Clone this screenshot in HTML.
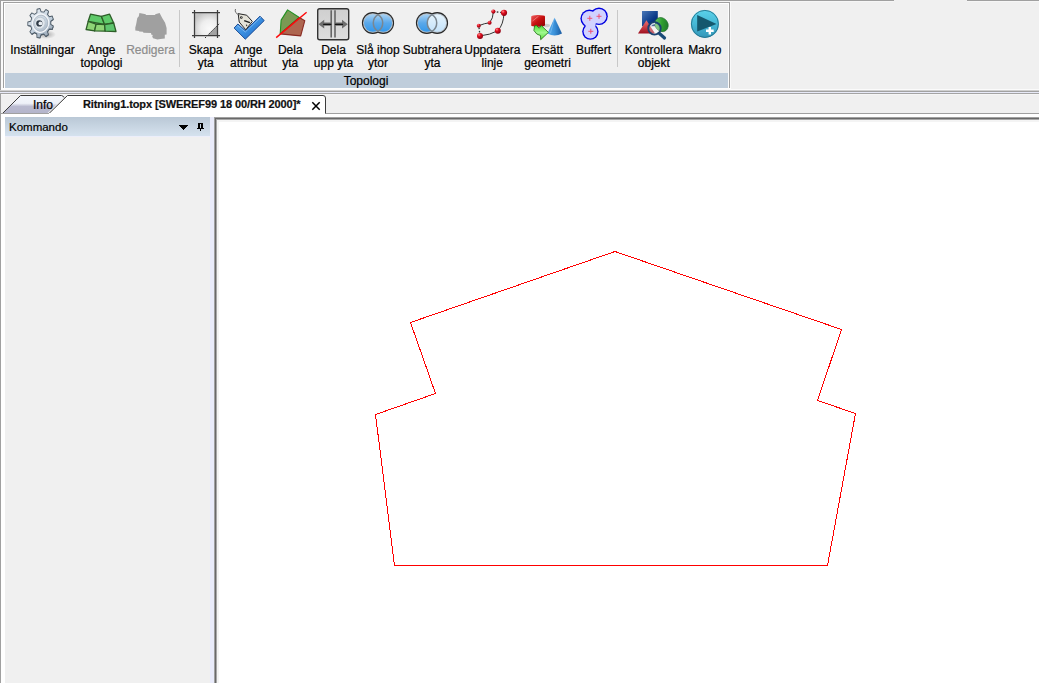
<!DOCTYPE html>
<html><head><meta charset="utf-8">
<style>
html,body{margin:0;padding:0;}
body{width:1039px;height:683px;overflow:hidden;position:relative;background:#f0f0f0;font-family:"Liberation Sans",sans-serif;font-size:12px;color:#000;-webkit-text-stroke:0.2px currentColor;}
.a{position:absolute;}
.lbl{position:absolute;text-align:center;white-space:nowrap;line-height:13px;width:100px;-webkit-text-stroke:0.2px currentColor;}
.ico{position:absolute;}
</style></head><body>
<!-- top border line -->
<div class="a" style="left:0;top:0;width:894px;height:1px;background:#a0a0a0"></div>
<div class="a" style="left:967px;top:0;width:72px;height:1px;background:#a0a0a0"></div>
<div class="a" style="left:0;top:1px;width:894px;height:1px;background:#f6f6f6"></div>
<div class="a" style="left:967px;top:1px;width:72px;height:1px;background:#f6f6f6"></div>
<!-- left border -->
<div class="a" style="left:0;top:0;width:1px;height:683px;background:#a0a0a0"></div>
<div class="a" style="left:1px;top:1px;width:2px;height:91px;background:#fafafa"></div>

<!-- ribbon group box -->
<div class="a" style="left:3px;top:2px;width:726px;height:1px;background:#a0a0a0"></div>
<div class="a" style="left:3px;top:2px;width:1px;height:86px;background:#a0a0a0"></div>
<div class="a" style="left:729px;top:2px;width:1px;height:86px;background:#a0a0a0"></div>
<div class="a" style="left:730px;top:2px;width:1px;height:87px;background:#fafafa"></div>
<div class="a" style="left:4px;top:3px;width:725px;height:1px;background:#fff"></div>
<div class="a" style="left:4px;top:3px;width:1px;height:85px;background:#fff"></div>
<div class="a" style="left:728px;top:3px;width:1px;height:85px;background:#fcfcfc"></div>
<!-- group label band -->
<div class="a" style="left:5px;top:73px;width:723px;height:15px;background:#bfcddb;"></div><div class="a" style="left:4.5px;top:74px;width:723px;text-align:center;line-height:15px;">Topologi</div>
<div class="a" style="left:1px;top:88px;width:730px;height:1px;background:#fdfdfd"></div>
<div class="a" style="left:1px;top:89px;width:1038px;height:1px;background:#fbfbfb"></div>
<div class="a" style="left:0;top:90px;width:1039px;height:1px;background:#d0d0d0"></div>
<div class="a" style="left:0;top:91px;width:1039px;height:1px;background:#a2a2a2"></div>
<div class="a" style="left:0;top:92px;width:1039px;height:1px;background:#e8eaf8"></div>
<div class="a" style="left:0;top:93px;width:1039px;height:1px;background:#a4a4a4"></div>
<div class="a" style="left:1px;top:94px;width:1038px;height:1px;background:#f6f6f6"></div>

<!-- separators -->
<div class="a" style="left:179px;top:10px;width:1px;height:57px;background:#c8c8c8"></div>
<div class="a" style="left:617px;top:10px;width:1px;height:57px;background:#c8c8c8"></div>

<!-- labels -->
<div class="lbl" style="left:-7.5px;top:44px">Inställningar</div>
<div class="lbl" style="left:51.5px;top:44px">Ange<br>topologi</div>
<div class="lbl" style="left:100.5px;top:44px;color:#8d8d8d">Redigera</div>
<div class="lbl" style="left:155.7px;top:44px">Skapa<br>yta</div>
<div class="lbl" style="left:198.4px;top:44px">Ange<br>attribut</div>
<div class="lbl" style="left:240.3px;top:44px">Dela<br>yta</div>
<div class="lbl" style="left:283.5px;top:44px">Dela<br>upp yta</div>
<div class="lbl" style="left:328px;top:44px">Slå ihop<br>ytor</div>
<div class="lbl" style="left:382.5px;top:44px">Subtrahera<br>yta</div>
<div class="lbl" style="left:442.3px;top:44px">Uppdatera<br>linje</div>
<div class="lbl" style="left:497.5px;top:44px">Ersätt<br>geometri</div>
<div class="lbl" style="left:543.5px;top:44px">Buffert</div>
<div class="lbl" style="left:603.8px;top:44px">Kontrollera<br>objekt</div>
<div class="lbl" style="left:654.8px;top:44px">Makro</div>

<!-- ICONS -->
<svg class="a" style="left:0;top:0" width="740" height="45">
<defs>
<linearGradient id="gearG" x1="0" y1="0" x2="1" y2="1"><stop offset="0" stop-color="#eef3f8"/><stop offset="0.55" stop-color="#c2cfdc"/><stop offset="1" stop-color="#8898a8"/></linearGradient>
<radialGradient id="gshadow" cx="0.5" cy="0.5" r="0.5"><stop offset="0" stop-color="#000" stop-opacity="0.3"/><stop offset="1" stop-color="#000" stop-opacity="0"/></radialGradient>
<radialGradient id="skapaG" cx="0.65" cy="0.7" r="0.75"><stop offset="0" stop-color="#fafafa"/><stop offset="0.5" stop-color="#eeeeee"/><stop offset="1" stop-color="#c4c4c4"/></radialGradient>
<linearGradient id="delaG" x1="0" y1="0" x2="0" y2="1"><stop offset="0" stop-color="#cfcfcf"/><stop offset="1" stop-color="#dedede"/></linearGradient>
<linearGradient id="blueC" x1="0" y1="0" x2="0" y2="1"><stop offset="0" stop-color="#a8d2f4"/><stop offset="0.5" stop-color="#5aa8ea"/><stop offset="1" stop-color="#3598ea"/></linearGradient>
<linearGradient id="lightC" x1="0" y1="0" x2="0" y2="1"><stop offset="0" stop-color="#e6f4fd"/><stop offset="1" stop-color="#c4e2fa"/></linearGradient>
<linearGradient id="checkG" x1="0" y1="0" x2="1" y2="1"><stop offset="0" stop-color="#6ab2f2"/><stop offset="0.5" stop-color="#3a8ee0"/><stop offset="1" stop-color="#1a62c0"/></linearGradient>
<radialGradient id="ballG" cx="0.35" cy="0.3" r="0.7"><stop offset="0" stop-color="#ff9090"/><stop offset="0.4" stop-color="#e01020"/><stop offset="1" stop-color="#900010"/></radialGradient>
<linearGradient id="cubeG" x1="0" y1="0" x2="1" y2="1"><stop offset="0" stop-color="#f06060"/><stop offset="0.5" stop-color="#c81010"/><stop offset="1" stop-color="#8a0000"/></linearGradient>
<linearGradient id="coneG" x1="0" y1="0" x2="1" y2="0"><stop offset="0" stop-color="#5ab0f0"/><stop offset="0.5" stop-color="#3a90d8"/><stop offset="1" stop-color="#1a5aa0"/></linearGradient>
<linearGradient id="arrG" x1="0" y1="0" x2="0" y2="1"><stop offset="0" stop-color="#50e030"/><stop offset="0.5" stop-color="#a0f890"/><stop offset="1" stop-color="#58e038"/></linearGradient>
<linearGradient id="sqG" x1="0" y1="0" x2="1" y2="1"><stop offset="0" stop-color="#4a78b8"/><stop offset="0.6" stop-color="#0a3a88"/><stop offset="1" stop-color="#002060"/></linearGradient>
<linearGradient id="triG" x1="0" y1="0" x2="0" y2="1"><stop offset="0" stop-color="#f07070"/><stop offset="1" stop-color="#a01020"/></linearGradient>
<linearGradient id="ellG" x1="0" y1="0" x2="1" y2="1"><stop offset="0" stop-color="#80d080"/><stop offset="0.5" stop-color="#30a030"/><stop offset="1" stop-color="#1a6a2a"/></linearGradient>
<linearGradient id="makG" x1="0" y1="0" x2="0" y2="1"><stop offset="0" stop-color="#5ad2ea"/><stop offset="0.5" stop-color="#46b8d6"/><stop offset="1" stop-color="#3496b8"/></linearGradient>
</defs>

<!-- gear -->
<ellipse cx="46" cy="34.5" rx="10" ry="4.5" fill="url(#gshadow)"/>
<g transform="translate(40.7,23.2) rotate(9) scale(0.93,1.06)">
<path d="M-5.78,-9.24 L-6.28,-12.40 L-3.19,-13.53 L-1.53,-10.79 L1.51,-10.80 L3.16,-13.54 L6.26,-12.41 L5.77,-9.25 L8.09,-7.30 L11.12,-8.34 L12.77,-5.49 L10.36,-3.38 L10.89,-0.39 L13.88,0.76 L13.31,4.01 L10.11,4.07 L8.60,6.70 L10.14,9.51 L7.62,11.62 L5.13,9.62 L2.28,10.66 L1.66,13.80 L-1.63,13.80 L-2.26,10.66 L-5.11,9.63 L-7.60,11.64 L-10.12,9.52 L-8.58,6.72 L-10.10,4.09 L-13.30,4.03 L-13.88,0.79 L-10.89,-0.37 L-10.37,-3.36 L-12.78,-5.46 L-11.14,-8.32 L-8.11,-7.29 Z" fill="#56646f" transform="translate(0.5,0.6)"/>
<path d="M-5.78,-9.24 L-6.28,-12.40 L-3.19,-13.53 L-1.53,-10.79 L1.51,-10.80 L3.16,-13.54 L6.26,-12.41 L5.77,-9.25 L8.09,-7.30 L11.12,-8.34 L12.77,-5.49 L10.36,-3.38 L10.89,-0.39 L13.88,0.76 L13.31,4.01 L10.11,4.07 L8.60,6.70 L10.14,9.51 L7.62,11.62 L5.13,9.62 L2.28,10.66 L1.66,13.80 L-1.63,13.80 L-2.26,10.66 L-5.11,9.63 L-7.60,11.64 L-10.12,9.52 L-8.58,6.72 L-10.10,4.09 L-13.30,4.03 L-13.88,0.79 L-10.89,-0.37 L-10.37,-3.36 L-12.78,-5.46 L-11.14,-8.32 L-8.11,-7.29 Z" fill="url(#gearG)" stroke="#4c5a66" stroke-width="0.9" stroke-linejoin="round"/>
<circle r="8.6" fill="none" stroke="#f4f7fa" stroke-width="1.4"/>
<circle r="7.6" fill="none" stroke="#a4b0bc" stroke-width="0.7"/>
<circle cx="-0.8" cy="0" r="5.6" fill="#e2e8ee"/>
<circle cx="-0.8" cy="0" r="5.6" fill="none" stroke="#b8c4ce" stroke-width="0.8"/>
</g>
<circle cx="39.3" cy="23.4" r="3.1" fill="#303c48"/>
<circle cx="40.4" cy="23.4" r="1.9" fill="#e8edf2"/>
<!-- ange topologi -->
<g stroke="#2d5e28" stroke-width="1.3" stroke-linejoin="round">
<path d="M90.5,14.2 L101.4,16.3 L104.6,24.5 L88.2,21.3 Z" fill="#5fca6a"/>
<path d="M101.4,16.3 L109.6,14.2 L113.7,23 L104.6,24.5 Z" fill="#5fca6a"/>
<path d="M88.2,21.3 L96.1,24.2 L94.6,30.9 L86.1,29.5 Z" fill="#8ed476"/>
<path d="M96.1,24.2 L104.6,24.5 L105.2,31.2 L94.6,30.9 Z" fill="#8ed476"/>
<path d="M104.6,24.5 L113.7,23 L116,31.5 L105.2,31.2 Z" fill="#5ec56e"/>
</g>

<!-- redigera -->
<path d="M139.4,13.1 L145.8,14.2 L145.8,15.1 L155.2,15.1 L155.2,14.2 L159.6,13.1 L162.2,18 L165.1,22.7 L166.6,28 L166.6,34.4 L164.8,34.7 L164.8,38.5 L160.4,39.1 L157.5,39.4 L153.1,38.3 L152.2,36.5 L152.8,35 L151.1,34.4 L151.1,33 L143.5,32.7 L142.9,31.8 L139.1,31.5 L139.1,30.9 L135.3,30.6 L135.3,27.4 L136.1,24.5 L137.3,18 L138.8,16.3 Z" fill="#a0a0a0"/>

<!-- skapa yta -->
<rect x="194.5" y="12.5" width="23" height="23" fill="url(#skapaG)"/>
<path d="M207,35.5 L217.5,25 L217.5,35.5 Z" fill="#a4a4a4"/>
<path d="M205,38 L220,23" stroke="#303030" stroke-width="1" stroke-dasharray="1.6,1.4"/>
<g stroke="#3e3e3e" stroke-width="1.25">
<path d="M194.5,10 V38 M217.5,10 V38 M192,12.5 H220 M192,35.5 H220"/>
</g>

<!-- ange attribut -->
<path d="M234.1,28 L237.9,24 L245.3,30.5 L260,16.2 L264.2,20.6 L245.3,39.2 Z" fill="url(#checkG)" stroke="#1a4c96" stroke-width="1" stroke-linejoin="round"/>
<path d="M237.5,25.6 L245.3,32 L261,17" fill="none" stroke="#a8d4f8" stroke-width="0.8" opacity="0.7"/>
<path d="M238.2,13.6 L246.7,15.2 L252.3,21.4 L245.8,29.8 L239.2,22 Z" fill="#e4e2d8" stroke="#262626" stroke-width="1" stroke-linejoin="round"/>
<circle cx="241.3" cy="17.5" r="1.3" fill="#1e1e1e"/><circle cx="241.6" cy="17.3" r="0.5" fill="#ddd"/>
<path d="M244.2,20.6 L249.9,22.6" fill="none" stroke="#1e1e1e" stroke-width="1.5"/><path d="M246.4,24.6 L246.8,26.2" fill="none" stroke="#3a3a3a" stroke-width="1.1"/>
<path d="M239.5,15 Q234,13 235.5,9" fill="none" stroke="#606060" stroke-width="0.9"/>

<!-- dela yta -->
<path d="M287.6,9.9 L299.3,17.5 L280.2,33.9 L281.1,20.1 Z" fill="#7a9a54" stroke="#229022" stroke-width="1.1" stroke-linejoin="round"/>
<path d="M299.3,17.5 L304.8,20.7 L300.7,35.9 L280.2,33.9 Z" fill="#ae6650" stroke="#8a2a22" stroke-width="1.1" stroke-linejoin="round"/>
<path d="M276.2,37.6 L306.6,12.2" stroke="#ff0a0a" stroke-width="1.4"/>

<!-- dela upp yta -->
<rect x="317.7" y="8.7" width="31" height="31" rx="2" fill="url(#delaG)" stroke="#333" stroke-width="1.4"/>
<path d="M331.2,10.2 V37.6 M335,10.2 V37.6" stroke="#666" stroke-width="1.6"/>
<path d="M318.4,24.2 L324.2,19.8 L324.2,22.6 L331.2,22.6 L331.2,25.8 L324.2,25.8 L324.2,28.6 Z" fill="#6e6e6e"/>
<path d="M347.8,24.2 L342,19.8 L342,22.6 L335,22.6 L335,25.8 L342,25.8 L342,28.6 Z" fill="#6e6e6e"/>
<path d="M323.2,24.3 H331.3 M334.9,24.3 H343" stroke="#000" stroke-width="1"/>

<!-- sla ihop -->
<g>
<circle cx="372.8" cy="23" r="10.9" fill="#262626"/>
<circle cx="383.2" cy="23" r="10.9" fill="#262626"/>
<circle cx="372.8" cy="23" r="9.8" fill="#b8c0c8"/>
<circle cx="383.2" cy="23" r="9.8" fill="#b8c0c8"/>
<circle cx="372.8" cy="23" r="8.8" fill="url(#blueC)"/>
<circle cx="383.2" cy="23" r="8.8" fill="url(#blueC)"/>
<path d="M378.00,14.58 A9.9,9.9 0 0 0 378.00,31.42 A9.9,9.9 0 0 0 378.00,14.58 Z" fill="url(#blueC)" stroke="#7a8690" stroke-width="1.5"/>
</g>

<!-- subtrahera -->
<g>
<circle cx="426.8" cy="23" r="10.9" fill="#262626"/>
<circle cx="437.2" cy="23" r="10.9" fill="#262626"/>
<circle cx="426.8" cy="23" r="9.8" fill="#b8c0c8"/>
<circle cx="437.2" cy="23" r="9.8" fill="#b8c0c8"/>
<circle cx="426.8" cy="23" r="8.8" fill="url(#blueC)"/>
<circle cx="437.2" cy="23" r="8.8" fill="url(#lightC)"/>
<path d="M432.00,14.58 A9.9,9.9 0 0 0 432.00,31.42 A9.9,9.9 0 0 0 432.00,14.58 Z" fill="url(#lightC)" stroke="#7a8690" stroke-width="1.5"/>
</g>

<!-- uppdatera linje -->
<g fill="none" stroke="#333" stroke-width="1">
<path d="M478.8,25.7 Q484.5,23.3 489.6,22.7 Q493.2,18.5 493.4,11.6"/>
<path d="M504,12.8 Q503.6,24.5 497.8,30.7 Q490,35 480,35.9"/>
<path d="M493.4,11.6 L504,12.8 M480,35.9 L478.8,25.7" stroke-width="1.3" stroke-dasharray="1.6,1.8"/>
</g>
<circle cx="493.4" cy="11.6" r="2.1" fill="url(#ballG)"/>
<circle cx="504" cy="12.8" r="3.1" fill="url(#ballG)"/>
<circle cx="489.6" cy="22.7" r="2" fill="url(#ballG)"/>
<circle cx="478.8" cy="25.7" r="2" fill="url(#ballG)"/>
<circle cx="497.8" cy="30.7" r="3" fill="url(#ballG)"/>
<circle cx="480" cy="35.9" r="3" fill="url(#ballG)"/>

<!-- ersatt geometri -->
<ellipse cx="546.5" cy="25.5" rx="3.5" ry="1.8" fill="#000" opacity="0.15"/>
<path d="M531.2,16.6 Q531.5,15.1 538,15 Q544.8,15.1 545,16.4 L545,25.2 Q544.8,26.6 538,26.8 Q531.3,26.6 531.2,25.6 Z" fill="url(#cubeG)"/>
<path d="M532.5,21 L538.5,16.2" stroke="#ff9a9a" stroke-width="0.8" opacity="0.8"/>
<path d="M554.6,17.8 L547.4,33.6 Q554.6,37.4 562,33.6 Z" fill="url(#coneG)"/>
<path d="M554.6,17.8 L550.5,33" stroke="#a8d8ff" stroke-width="0.7" opacity="0.6"/>
<path d="M534.6,25.8 L536.6,25.6 L539.2,28.2 L541.2,25.4 L548.4,32.4 L540.7,39.7 L540.5,35.6 L536.8,34 L533.9,30.5 Z" fill="url(#arrG)" stroke="#1c6c10" stroke-width="0.8" stroke-linejoin="round"/>

<!-- buffert -->
<g fill="#0000e0">
<circle cx="589.4" cy="18.6" r="9"/>
<circle cx="599" cy="16.3" r="8.8"/>
<circle cx="590.4" cy="31.6" r="8.2"/>
</g>
<g fill="#d2d2ff">
<circle cx="589.4" cy="18.6" r="7.6"/>
<circle cx="599" cy="16.3" r="7.4"/>
<circle cx="590.4" cy="31.6" r="6.8"/>
<path d="M585,22 L596,22 L595,28 L586,28 Z"/>
</g>
<g stroke="#f04868" stroke-width="0.9">
<path d="M587.3,18.3 H592.3 M589.8,15.8 V20.8"/>
<path d="M596.5,16.3 H601.5 M599,13.8 V18.8"/>
<path d="M588.3,31.3 H593.3 M590.8,28.8 V33.8"/>
</g>

<!-- kontrollera objekt -->
<rect x="642" y="11" width="15.8" height="15.2" fill="url(#sqG)"/>
<path d="M646.4,20.3 L638,33.6 L655,33.6 Z" fill="url(#triG)"/>
<ellipse cx="661.5" cy="24.6" rx="6.4" ry="7.4" transform="rotate(-35 661.5 24.6)" fill="url(#ellG)" stroke="#1e6a2a" stroke-width="0.6"/>
<path d="M659.5,33.5 L664.5,38" stroke="#1a4a78" stroke-width="3.2" stroke-linecap="round"/>
<circle cx="654.5" cy="28.4" r="6.2" fill="#ffffff" fill-opacity="0.3" stroke="#1a4270" stroke-width="1.9"/>
<path d="M650.5,26 Q652,23.5 655,23.3" stroke="#fff" stroke-width="1.2" fill="none" opacity="0.8"/>

<!-- makro -->
<circle cx="704.9" cy="23.9" r="14" fill="url(#makG)"/>
<circle cx="704.9" cy="23.9" r="13.5" fill="none" stroke="#23708a" stroke-width="1" opacity="0.85"/>
<path d="M697.2,15.1 L697.2,31.5 L716.5,23.9 Z" fill="#15586e"/>
<path d="M709.8,26.9 V34.6 M706,30.8 H713.7" stroke="#fff" stroke-width="2.4"/>
</svg>


<!-- tab strip -->
<div class="a" style="left:1px;top:113px;width:1038px;height:1px;background:#a0a0a0"></div>
<svg class="a" style="left:0;top:94px" width="340" height="20">
<defs><linearGradient id="ig" x1="0" y1="0" x2="0" y2="1">
<stop offset="0" stop-color="#f4f7fc"/><stop offset="0.45" stop-color="#eef1f8"/><stop offset="0.62" stop-color="#b9bacf"/><stop offset="1" stop-color="#b4b5cb"/></linearGradient></defs>
<path d="M2,19.5 L20.5,1 L61.5,1 Q63.5,1 64.5,3 L47,19.5 Z" fill="url(#ig)"/>
<path d="M2.5,19.5 L20.5,1.5 L61.5,1.5 Q63,1.5 64,3.5" fill="none" stroke="#3c3c3c" stroke-width="1"/>
<path d="M49,19.5 L67.5,1.5 L323,1.5 Q325.5,1.5 325.5,4 L325.5,19.5 Z" fill="#fff"/>
<path d="M49,19.5 L67.5,1.5 L323,1.5 Q325.5,1.5 325.5,4 L325.5,19.5" fill="none" stroke="#3c3c3c" stroke-width="1"/>
<path d="M312.3,8.3 L319.7,15.7 M319.7,8.3 L312.3,15.7" stroke="#000" stroke-width="1.5"/>
</svg>
<div class="a" style="left:2px;top:113px;width:47px;height:1px;background:#a0a0a0"></div>
<div class="a" style="left:49px;top:113px;width:276px;height:1px;background:#fff"></div>
<div class="a" style="left:33px;top:96px;line-height:19px;font-size:12px;color:#000">Info</div>
<div class="a" style="left:83px;top:95px;line-height:19px;font-size:11px;font-weight:bold;letter-spacing:-0.1px;color:#111">Ritning1.topx [SWEREF99 18 00/RH 2000]*</div>

<!-- left panel -->
<div class="a" style="left:1px;top:114px;width:4px;height:569px;background:#fff"></div>
<div class="a" style="left:1px;top:114px;width:1038px;height:3px;background:#fff"></div>
<div class="a" style="left:5px;top:117px;width:205px;height:19px;background:linear-gradient(#bac8d6,#d5e2ee)"></div>
<div class="a" style="left:5px;top:136px;width:205px;height:1px;background:#eceefa"></div>
<div class="a" style="left:9px;top:118px;line-height:19px;font-size:11.5px;color:#000">Kommando</div>
<svg class="a" style="left:170px;top:117px" width="40" height="19" shape-rendering="crispEdges">
<path d="M9,8h9v1h-9z M10,9h7v1h-7z M11,10h5v1h-5z M12,11h3v1h-3z M13,12h1v1h-1z" fill="#000"/>
<path d="M28,6h5v1h-5z M28,7h2v4h-2z M31,7h2v4h-2z M27,11h7v1h-7z M30,12h1v2h-1z" fill="#000"/>
</svg>
<div class="a" style="left:210px;top:117px;width:4px;height:566px;background:#e9ebfa"></div>

<!-- map view -->
<div class="a" style="left:214px;top:117px;width:825px;height:566px;background:#fff"></div>
<div class="a" style="left:214px;top:117px;width:825px;height:1px;background:#a0a0a0"></div>
<div class="a" style="left:215px;top:118px;width:824px;height:1px;background:#696969"></div>
<div class="a" style="left:214px;top:117px;width:1px;height:566px;background:#a0a0a0"></div>
<div class="a" style="left:215px;top:118px;width:1px;height:565px;background:#696969"></div>
<div class="a" style="left:216px;top:119px;width:823px;height:1px;background:#a8a8a8"></div>
<div class="a" style="left:216px;top:119px;width:1px;height:564px;background:#a8a8a8"></div>
<div class="a" style="left:217px;top:120px;width:822px;height:2px;background:#f4f4f4"></div>
<div class="a" style="left:217px;top:120px;width:2px;height:563px;background:#f4f4f4"></div>

<svg class="a" style="left:0;top:0" width="1039" height="683" shape-rendering="crispEdges">
<polygon fill="none" stroke="#ff0000" stroke-width="1" points="615,251.5 841.5,329.5 817.5,400.5 855.5,413.5 827.5,565.5 394.5,565.5 375.5,414.5 435.5,393.5 410.5,322.5"/>
</svg>

</body></html>
